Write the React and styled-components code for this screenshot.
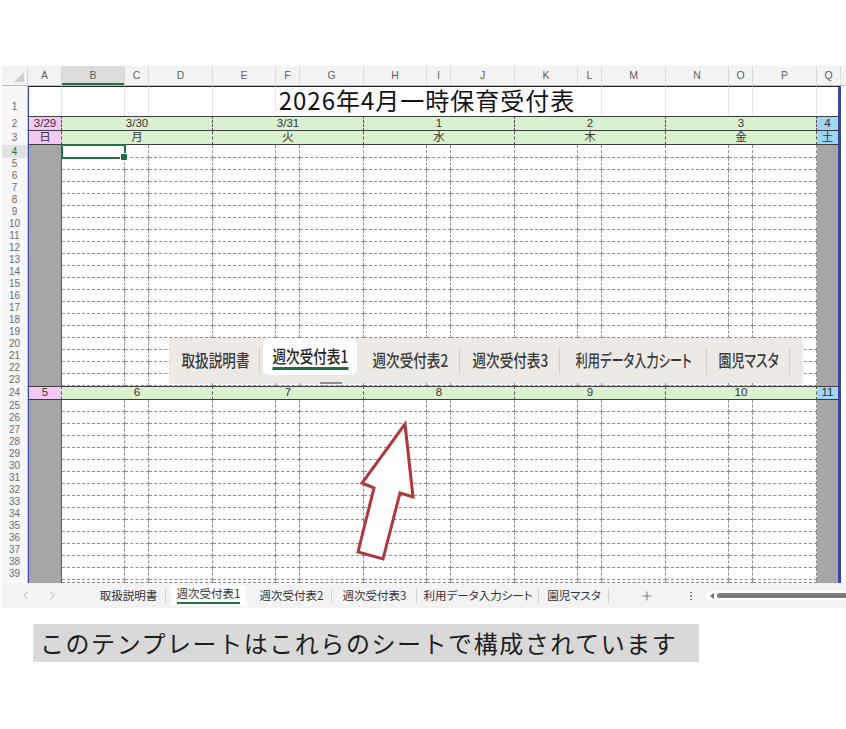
import React from 'react'
import styled, { createGlobalStyle, css } from 'styled-components'
import { ChevronLeft, ChevronRight, Plus, EllipsisVertical } from 'lucide-react'

const GlobalStyle = createGlobalStyle`
  * { box-sizing: border-box; }
  html, body { margin: 0; padding: 0; background: #ffffff; }
  body { font-family: "Noto Sans CJK JP", "Noto Sans", sans-serif; }
`

const COLS = '26px 34px repeat(5, 63px 24px 64px) 24px 1fr'
const GRID_LINE = '1px dashed #8f8f8f'
const DARK_LINE = '1px solid #3d3d3d'
const EDGE = '#3a46a6'

const Page = styled.div`
  padding: 66px 0 40px 2px;
`

const Sheet = styled.div`
  position: relative;
  width: 844px;
  background: #fff;
  overflow: hidden;
`

const Row = styled.div`
  display: grid;
  grid-template-columns: ${COLS};
  height: ${p => p.$h}px;
`

const HeadRow = styled(Row)`
  background: #f3f3f3;
  border-bottom: 1px solid #bdbdbd;
`

const Corner = styled.div`
  position: relative;
  border-right: 1px solid #d6d6d6;
  &::after {
    content: '';
    position: absolute;
    right: 3px;
    bottom: 3px;
    border-style: solid;
    border-width: 0 0 10px 10px;
    border-color: transparent transparent #cfcfcf transparent;
  }
`

const ColHead = styled.div`
  display: flex;
  align-items: center;
  justify-content: center;
  padding-bottom: 1px;
  font: 10.5px/1 "Liberation Sans", sans-serif;
  color: #5f5f5f;
  border-right: 1px solid #dadada;
  background: ${p => (p.$active ? '#dcdcdc' : 'transparent')};
  box-shadow: ${p => (p.$active ? 'inset 0 -2px 0 #217346' : 'none')};
`

const RowNum = styled.div`
  display: flex;
  align-items: ${p => (p.$tall ? 'flex-end' : 'center')};
  justify-content: center;
  padding-bottom: ${p => (p.$tall ? '4px' : '0')};
  background: ${p => (p.$sel ? '#e1e1e1' : '#f7f7f7')};
  border-right: 1px solid #c9c9c9;
  color: ${p => (p.$sel ? '#217346' : '#6b6b6b')};
  font: 10px/1 "Liberation Sans", sans-serif;
  overflow: hidden;
`

const PlainCell = styled.div`
  border-top: 1px solid #222;
  border-right: 1px solid #e4e4e4;
  ${p => p.$first && css`border-left: 1px solid ${EDGE};`}
  ${p => p.$last && css`border-right: 3px solid ${EDGE};`}
`

const TitleCell = styled.div`
  grid-column: span 6;
  display: flex;
  align-items: center;
  justify-content: center;
  padding-bottom: 4px;
  border-top: 1px solid #222;
  font: 400 24px/1 "Noto Sans CJK JP", sans-serif;
  letter-spacing: 1px;
  color: #111;
`

const dayBand = css`
  display: flex;
  align-items: center;
  justify-content: center;
  font: 11.5px/1 "Liberation Sans", "Noto Sans CJK JP", sans-serif;
  color: #333;
  overflow: hidden;
  border-bottom: ${DARK_LINE};
  ${p => p.$top && css`border-top: ${DARK_LINE};`}
`

const SunCell = styled.div`
  ${dayBand}
  background: #f5c8f5;
  border-left: 1px solid ${EDGE};
  border-right: 1px dashed #555;
`

const DayCell = styled.div`
  ${dayBand}
  grid-column: span 3;
  background: #d9f1cf;
  border-right: 1px dashed #555;
`

const SatCell = styled.div`
  ${dayBand}
  background: #9fd6f4;
  border-right: 3px solid ${EDGE};
`

const GrayCell = styled.div`
  background: #a6a6a6;
  ${p =>
    p.$left
      ? css`border-left: 1px solid ${EDGE}; border-right: 1px solid #5a5a5a;`
      : css`border-right: 3px solid ${EDGE};`}
`

const GridCell = styled.div`
  position: relative;
  border-right: ${GRID_LINE};
  border-bottom: ${GRID_LINE};
  ${p =>
    p.$selected &&
    css`
      outline: 2px solid #217346;
      outline-offset: -1px;
      z-index: 1;
      &::after {
        content: '';
        position: absolute;
        right: -4px;
        bottom: -4px;
        width: 6px;
        height: 6px;
        background: #217346;
        border: 1px solid #fff;
      }
    `}
`

const Filler = styled.div``

/* bottom sheet tab bar */
const TabBar = styled.div`
  display: flex;
  align-items: center;
  height: 25px;
  background: #f3f3f3;
  font: 11.5px/1 "Noto Sans CJK JP", sans-serif;
  font-feature-settings: "palt";
  color: #333;
`

const Nav = styled.div`
  width: 89px;
  display: flex;
  padding-left: 10px;
  color: #a3a3a3;
`

const NavBtn = styled.div`
  width: 27px;
  display: flex;
  justify-content: center;
`

const SheetTab = styled.div`
  position: relative;
  width: ${p => p.$w}px;
  height: 100%;
  flex: none;
  display: flex;
  align-items: center;
  justify-content: center;
  color: ${p => (p.$muted ? '#666' : '#333')};
  ${p =>
    p.$sep &&
    css`
      &::after {
        content: '';
        position: absolute;
        right: 0;
        top: 6px;
        bottom: 5px;
        width: 1px;
        background: #d0d0d0;
      }
    `}
`

const ActiveFace = styled.div`
  flex: 1;
  margin: 2px 5px;
  align-self: stretch;
  background: #fff;
  display: flex;
  align-items: center;
  justify-content: center;
  padding-top: 1px;
`

const Underlined = styled.span`
  padding-bottom: 2px;
  border-bottom: 2px solid #217346;
`

const ScrollTrack = styled.div`
  margin-left: 9px;
  flex: 1;
  height: 9px;
  display: flex;
  align-items: center;
  gap: 3px;
  padding-left: 4px;
  background: #fff;
  border-radius: 5px 0 0 5px;
`

const ScrollArrow = styled.div`
  width: 0;
  height: 0;
  border-style: solid;
  border-width: 3px 4px 3px 0;
  border-color: transparent #6e6e6e transparent transparent;
`

const ScrollThumb = styled.div`
  flex: 1;
  height: 5px;
  border-radius: 3px 0 0 3px;
  background: #7d7d7d;
`

/* enlarged tab strip lying over the sheet */
const Strip = styled.div`
  position: absolute;
  left: 168px;
  top: 272px;
  width: 632px;
  height: 44px;
  display: flex;
  background: #edeae6;
  box-shadow: 0 1px 3px rgba(0, 0, 0, 0.18);
  font: 500 17px/1 "Noto Sans CJK JP", sans-serif;
  font-feature-settings: "palt";
  color: #3a3a3a;
`

const StripTab = styled.div`
  position: relative;
  width: ${p => p.$w}px;
  flex: none;
  display: flex;
  align-items: center;
  justify-content: center;
  padding-bottom: 2px;
  ${p =>
    p.$sep &&
    css`
      &::after {
        content: '';
        position: absolute;
        right: 0;
        top: 10px;
        bottom: 8px;
        width: 1px;
        background: #d3cec7;
      }
    `}
`

const StripFace = styled.div`
  flex: 1;
  align-self: stretch;
  margin: 0 5px 5px;
  background: #fff;
  border-radius: 6px;
  display: flex;
  align-items: center;
  justify-content: center;
  padding-top: 3px;
`

const StripLabel = styled.span`
  display: inline-block;
  white-space: nowrap;
  transform: scaleX(${p => p.$scale || 0.8});
  ${p =>
    p.$active &&
    css`
      padding-bottom: 3px;
      border-bottom: 3px solid #1d6b44;
      color: #222;
    `}
`

const Nub = styled.div`
  position: absolute;
  left: 150px;
  bottom: -2px;
  width: 22px;
  height: 2px;
  background: #8f8f8f;
`

const Arrow = styled.svg`
  position: absolute;
  left: 348px;
  top: 349px;
`

const Caption = styled.div`
  margin: 16px 0 0 31px;
  width: 666px;
  height: 38px;
  display: flex;
  align-items: center;
  padding-left: 7px;
  background: #d9d9d9;
  font: 400 24px/1 "Noto Sans CJK JP", sans-serif;
  letter-spacing: 1.55px;
  color: #1e1e1e;
  white-space: nowrap;
`

const LETTERS = 'ABCDEFGHIJKLMNOPQ'.split('')

const DAY_ROWS = {
  2: { sun: '3/29', days: ['3/30', '3/31', '1', '2', '3'], sat: '4', top: true, h: 15 },
  3: { sun: '日', days: ['月', '火', '水', '木', '金'], sat: '土', h: 14 },
  24: { sun: '5', days: ['6', '7', '8', '9', '10'], sat: '11', top: true, h: 14 },
}

const TABS = ['取扱説明書', '週次受付表1', '週次受付表2', '週次受付表3', '利用データ入力シート', '園児マスタ']
const BAR_WIDTHS = [75, 85, 81, 85, 122, 70]
const STRIP_WIDTHS = [90, 100, 100, 100, 147, 83]
const STRIP_SCALES = [0.8, 0.8, 0.8, 0.8, 0.72, 0.76]

function rowHeight(n) {
  if (n === 4) return 13
  if (n === 40) return 3
  return 12
}

function EmptyRow({ n }) {
  return (
    <Row $h={rowHeight(n)}>
      <RowNum $sel={n === 4}>{n < 40 ? n : ''}</RowNum>
      <GrayCell $left />
      {Array.from({ length: 15 }).map((_, i) => (
        <GridCell key={i} $selected={n === 4 && i === 0} />
      ))}
      <GrayCell />
      <Filler />
    </Row>
  )
}

function DayRow({ n }) {
  const d = DAY_ROWS[n]
  return (
    <Row $h={d.h}>
      <RowNum>{n}</RowNum>
      <SunCell $top={d.top}>{d.sun}</SunCell>
      {d.days.map(day => (
        <DayCell key={day} $top={d.top}>{day}</DayCell>
      ))}
      <SatCell $top={d.top}>{d.sat}</SatCell>
      <Filler />
    </Row>
  )
}

function TitleRow() {
  return (
    <Row $h={30}>
      <RowNum $tall>1</RowNum>
      <PlainCell $first />
      {['B', 'C', 'D', 'E'].map(c => <PlainCell key={c} />)}
      <TitleCell>2026年4月一時保育受付表</TitleCell>
      {['L', 'M', 'N', 'O', 'P'].map(c => <PlainCell key={c} />)}
      <PlainCell $last />
      <Filler />
    </Row>
  )
}

const bodyRows = []
for (let n = 4; n <= 40; n++) bodyRows.push(n)

export default function App() {
  return (
    <Page>
      <GlobalStyle />
      <Sheet>
        <HeadRow $h={20}>
          <Corner />
          {LETTERS.map(l => (
            <ColHead key={l} $active={l === 'B'}>{l}</ColHead>
          ))}
          <Filler />
        </HeadRow>

        <TitleRow />
        <DayRow n={2} />
        <DayRow n={3} />
        {bodyRows.map(n => (DAY_ROWS[n] ? <DayRow key={n} n={n} /> : <EmptyRow key={n} n={n} />))}

        <TabBar>
          <Nav>
            <NavBtn><ChevronLeft size={13} strokeWidth={1.5} /></NavBtn>
            <NavBtn><ChevronRight size={13} strokeWidth={1.5} /></NavBtn>
          </Nav>
          {TABS.map((t, i) =>
            i === 1 ? (
              <SheetTab key={t} $w={BAR_WIDTHS[i]}>
                <ActiveFace><Underlined>{t}</Underlined></ActiveFace>
              </SheetTab>
            ) : (
              <SheetTab key={t} $w={BAR_WIDTHS[i]} $sep>{t}</SheetTab>
            )
          )}
          <SheetTab $w={76} $muted><Plus size={14} strokeWidth={1.4} /></SheetTab>
          <SheetTab $w={12} $muted><EllipsisVertical size={12} strokeWidth={2} /></SheetTab>
          <ScrollTrack>
            <ScrollArrow />
            <ScrollThumb />
          </ScrollTrack>
        </TabBar>

        <Strip>
          {TABS.map((t, i) =>
            i === 1 ? (
              <StripTab key={t} $w={STRIP_WIDTHS[i]}>
                <StripFace><StripLabel $active>{t}</StripLabel></StripFace>
              </StripTab>
            ) : (
              <StripTab key={t} $w={STRIP_WIDTHS[i]} $sep>
                <StripLabel $scale={STRIP_SCALES[i]}>{t}</StripLabel>
              </StripTab>
            )
          )}
          <Nub />
        </Strip>

        <Arrow width="75" height="155" viewBox="0 0 75 155">
          <polygon
            points="55,9 63,82 50,78 33,144 8,137 24,73 12,68"
            fill="#ffffff"
            stroke="#b0383b"
            strokeWidth="3"
            strokeLinejoin="miter"
          />
        </Arrow>
      </Sheet>

      <Caption>このテンプレートはこれらのシートで構成されています</Caption>
    </Page>
  )
}
